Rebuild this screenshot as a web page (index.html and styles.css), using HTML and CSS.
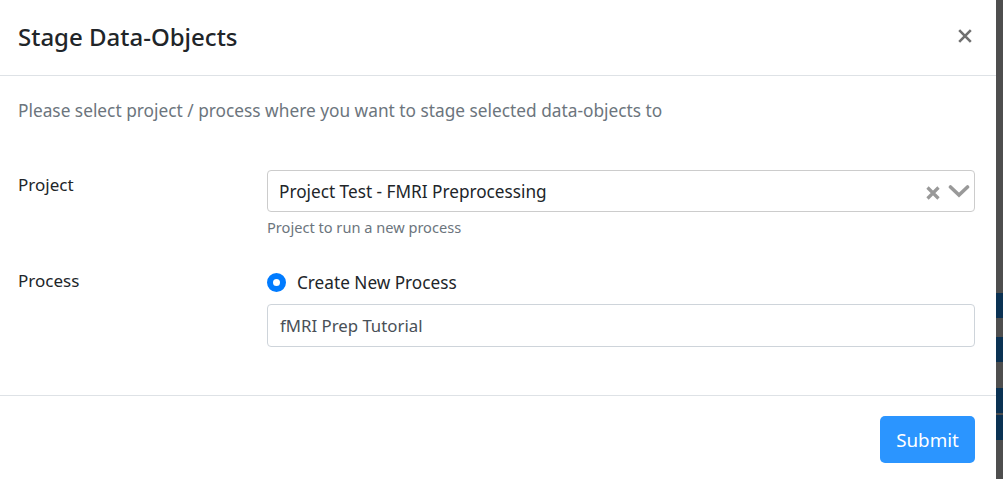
FILE: index.html
```html
<!DOCTYPE html>
<html>
<head>
<meta charset="utf-8">
<link rel="stylesheet" href="styles.css">
</head>
<body>
<div class="page">
  <div class="modal">
    <div class="modal-header">
      <h5 class="modal-title">Stage Data-Objects</h5>
      <span class="close"><svg width="14" height="14" viewBox="0 0 14 14"><path d="M1.2 1.2 L12.8 12.8 M12.8 1.2 L1.2 12.8" stroke="#707070" stroke-width="2.6"/></svg></span>
    </div>
    <div class="modal-body">
      <p class="intro">Please select project / process where you want to stage selected data-objects to</p>
      <div class="form-row project-row">
        <label class="col-label">Project</label>
        <div class="col-field">
          <div class="select">
            <span class="select-value">Project Test - FMRI Preprocessing</span>
            <span class="select-icons">
              <svg class="clear-icon" width="14" height="14" viewBox="0 0 14 14"><path d="M1.5 1.5 L12.5 12.5 M12.5 1.5 L1.5 12.5" stroke="#999" stroke-width="3.2"/></svg>
              <svg class="chev-icon" width="22" height="14" viewBox="0 0 22 14"><path d="M2.5 3 L11 11 L19.5 3" stroke="#999" stroke-width="3.6" fill="none" stroke-linecap="round"/></svg>
            </span>
          </div>
          <small class="help">Project to run a new process</small>
        </div>
      </div>
      <div class="form-row process-row">
        <label class="col-label">Process</label>
        <div class="col-field">
          <div class="radio">
            <span class="radio-dot"></span>
            <span class="radio-label">Create New Process</span>
          </div>
          <div class="input">fMRI Prep Tutorial</div>
        </div>
      </div>
    </div>
    <div class="modal-footer">
      <button class="btn-submit">Submit</button>
    </div>
  </div>
  <div class="backdrop">
    <div class="band band1"></div>
    <div class="band band2"></div>
    <div class="band band3"></div>
    <div class="band band4"></div>
  </div>
</div>
</body>
</html>
```
FILE: styles.css
```css
html, body {
  margin: 0;
  padding: 0;
  height: 100%;
}
body {
  font-family: "Segoe UI", "Noto Sans", "Open Sans", sans-serif;
  color: #212529;
  background: #fff;
}
.page {
  display: flex;
  height: 479px;
  overflow: hidden;
}
.modal {
  width: 996px;
  flex: none;
  background: #fff;
  display: flex;
  flex-direction: column;
}
.modal-header {
  height: 76px;
  box-sizing: border-box;
  border-bottom: 1px solid #dee2e6;
  display: flex;
  align-items: center;
  justify-content: space-between;
  padding: 0 24px 2px 18px;
}
.modal-title {
  margin: 0;
  font-size: 24px;
  font-weight: 500;
  line-height: 30px;
}
.close {
  display: flex;
  margin-top: -2px;
}
.modal-body {
  padding: 22px 21px 0 18px;
  height: 320px;
  box-sizing: border-box;
  border-bottom: 1px solid #dee2e6;
}
.intro {
  margin: 0 0 46px;
  font-size: 17.3px;
  line-height: 26px;
  color: #6c757d;
}
.form-row {
  display: grid;
  grid-template-columns: 249px 1fr;
}
.project-row {
  margin-bottom: 32px;
}
.col-label {
  font-size: 17px;
  line-height: 26px;
  padding-top: 2px;
}
.process-row .col-label {
  padding-top: 0;
  margin-top: -2px;
}
.select {
  height: 42px;
  box-sizing: border-box;
  border: 1px solid #ccc;
  border-radius: 4px;
  display: flex;
  align-items: center;
  justify-content: space-between;
  padding: 0 4px 0 11px;
}
.select-value {
  font-size: 17.2px;
}
.select-icons {
  display: flex;
  align-items: center;
  gap: 8px;
}
.clear-icon {
  margin-top: 3px;
}
.help {
  display: block;
  margin-top: 5px;
  font-size: 14.6px;
  line-height: 21px;
  color: #6c757d;
}
.radio {
  display: flex;
  align-items: center;
  gap: 11px;
  height: 24px;
  margin-bottom: 10px;
}
.radio-dot {
  width: 19px;
  height: 19px;
  box-sizing: border-box;
  border-radius: 50%;
  border: 6px solid #007bff;
  background: #fff;
}
.radio-label {
  font-size: 17.2px;
}
.input {
  height: 43px;
  box-sizing: border-box;
  border: 1px solid #ced4da;
  border-radius: 4px;
  padding: 0 12px;
  display: flex;
  align-items: center;
  font-size: 16.8px;
  color: #495057;
}
.modal-footer {
  display: flex;
  justify-content: flex-end;
  padding: 20px 21px 0 18px;
}
.btn-submit {
  width: 95px;
  height: 47px;
  background: #2b95ff;
  color: #fff;
  border: none;
  border-radius: 5px;
  font-family: inherit;
  font-size: 18.8px;
  padding: 0;
}
.backdrop {
  flex: 1;
  background: #4e4e4e;
  position: relative;
}
.band {
  position: absolute;
  left: 0;
  right: 0;
  background: #0b3253;
}
.band1 { top: 293px; height: 25px; }
.band2 { top: 337px; height: 25px; }
.band3 { top: 388px; height: 25px; }
.band4 { top: 415px; height: 25px; }
```
